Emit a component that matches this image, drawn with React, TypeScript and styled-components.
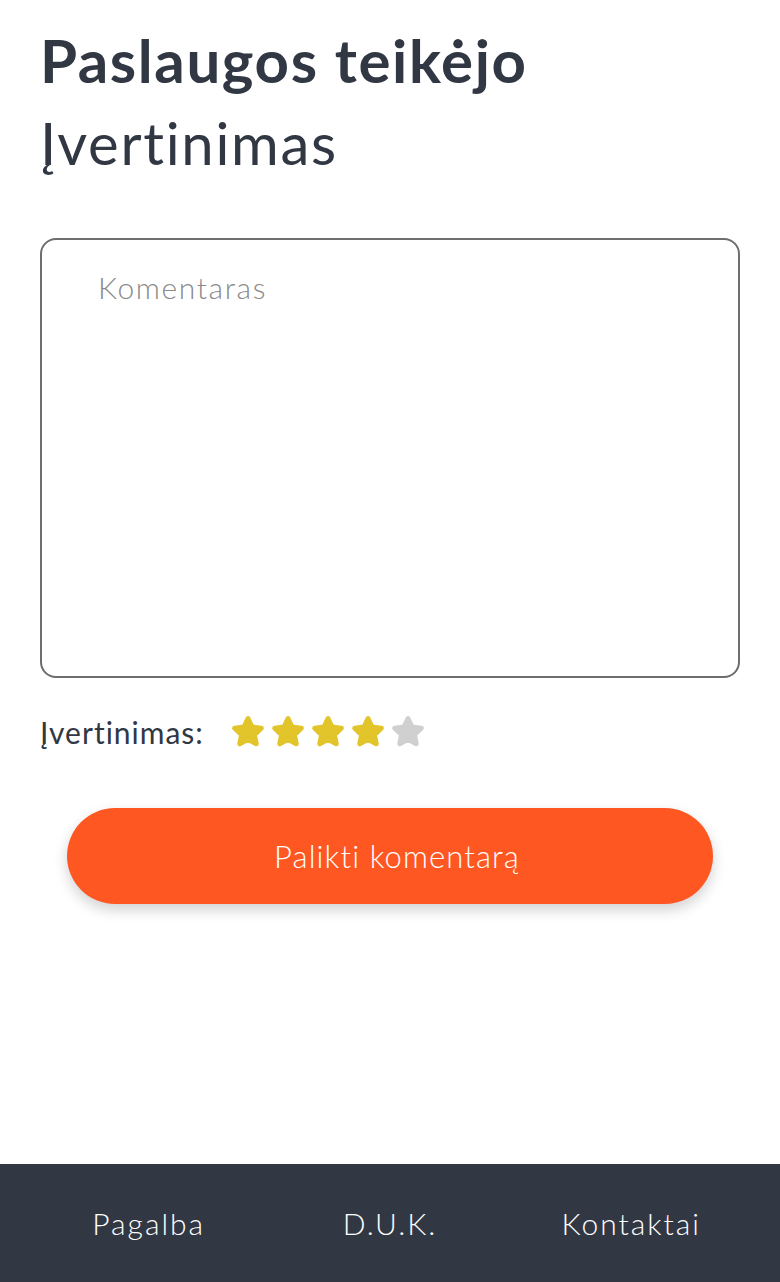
import React from "react";
import styled, { createGlobalStyle } from "styled-components";

const Global = createGlobalStyle`
  html, body { margin: 0; padding: 0; background: #fff; }
  body { font-family: Lato, "Open Sans", sans-serif; color: #313843; }
  * { box-sizing: border-box; }
`;

const Page = styled.div`
  min-height: 100vh;
  display: flex;
  flex-direction: column;
`;

const Main = styled.main`
  flex: 1;
  padding: 20px 40px 0 40px;
  display: flex;
  flex-direction: column;
`;

const Title = styled.h1`
  margin: 0;
  font-size: 60px;
  font-weight: 700;
  letter-spacing: 1.6px;
  line-height: 80px;
  color: #313843;
`;

const Subtitle = styled.h2`
  margin: 0;
  font-size: 58px;
  font-weight: 400;
  letter-spacing: 1.7px;
  line-height: 86px;
  color: #313843;
`;

const CommentBox = styled.textarea`
  margin-top: 52px;
  width: 100%;
  height: 440px;
  border: 2px solid #6e6e6e;
  border-radius: 16px;
  padding: 29px 56px;
  font-family: inherit;
  font-size: 30px;
  font-weight: 300;
  letter-spacing: 1.6px;
  color: #313843;
  resize: none;
  outline: none;
  &::placeholder { color: #8a8a8a; }
`;

const RatingRow = styled.div`
  margin-top: 36px;
  display: flex;
  align-items: center;
  gap: 27px;
`;

const RatingLabel = styled.span`
  font-size: 30px;
  letter-spacing: 1px;
  color: #313843;
`;

const Stars = styled.div`
  display: flex;
  gap: 6px;
`;

const Actions = styled.div`
  display: flex;
  justify-content: center;
  margin-top: 58px;
`;

const SubmitButton = styled.button`
  width: 646px;
  height: 96px;
  border: none;
  border-radius: 48px;
  background: #ff5722;
  color: #fff;
  font-family: inherit;
  font-size: 31px;
  font-weight: 300;
  letter-spacing: 1.1px;
  padding-left: 20px;
  box-shadow: 0 6px 14px rgba(0, 0, 0, 0.18);
  cursor: pointer;
`;

const Footer = styled.footer`
  height: 118px;
  background: #323843;
  display: grid;
  grid-template-columns: 1fr 1fr 1fr;
  align-items: center;
  padding: 0 28px 0 28px;
`;

const FooterLink = styled.a`
  justify-self: center;
  color: #fff;
  font-size: 30px;
  font-weight: 300;
  letter-spacing: 2px;
  text-decoration: none;
`;

const Star: React.FC<{ filled: boolean }> = ({ filled }) => {
  const c = filled ? "#e2c52a" : "#d0d0d0";
  const pts: string[] = [];
  for (let i = 0; i < 10; i++) {
    const r = i % 2 === 0 ? 14 : 6.8;
    const a = (Math.PI / 5) * i - Math.PI / 2;
    pts.push(`${(17 + r * Math.cos(a)).toFixed(2)},${(18.5 + r * Math.sin(a)).toFixed(2)}`);
  }
  return (
    <svg width="34" height="36" viewBox="0 0 34 36">
      <polygon points={pts.join(" ")} fill={c} stroke={c} strokeWidth="5" strokeLinejoin="round" />
    </svg>
  );
};

export default function App() {
  const rating = 4;
  return (
    <Page>
      <Global />
      <Main>
        <Title>Paslaugos teikėjo</Title>
        <Subtitle>Įvertinimas</Subtitle>
        <CommentBox placeholder="Komentaras" />
        <RatingRow>
          <RatingLabel>Įvertinimas:</RatingLabel>
          <Stars>
            {[1, 2, 3, 4, 5].map((n) => (
              <Star key={n} filled={n <= rating} />
            ))}
          </Stars>
        </RatingRow>
        <Actions>
          <SubmitButton>Palikti komentarą</SubmitButton>
        </Actions>
      </Main>
      <Footer>
        <FooterLink href="#">Pagalba</FooterLink>
        <FooterLink href="#">D.U.K.</FooterLink>
        <FooterLink href="#">Kontaktai</FooterLink>
      </Footer>
    </Page>
  );
}
